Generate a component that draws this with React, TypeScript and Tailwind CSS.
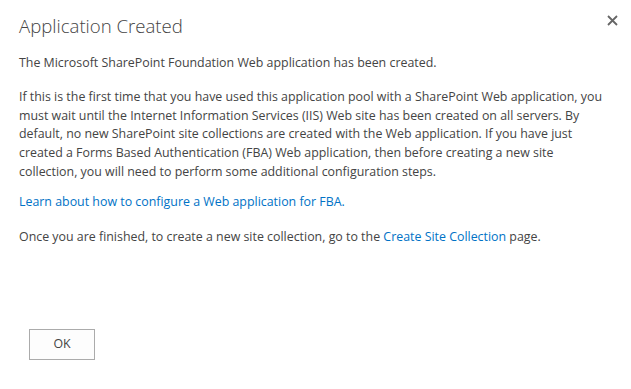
export default function App() {
  return (
    <div className="w-[631px] h-[389px] bg-white relative font-['Open_Sans',sans-serif] text-[#444444]">
      <button className="absolute right-[11px] top-[12px] w-[16px] h-[16px] flex items-center justify-center">
        <svg width="11" height="11" viewBox="0 0 11 11">
          <path d="M1 1L10 10M10 1L1 10" stroke="#666666" strokeWidth="1.8" />
        </svg>
      </button>
      <div className="flex flex-col pl-[19px] pr-[20px] pt-[12px]">
        <h1 className="text-[18.6px] font-light leading-[28px] text-[#444444]">Application Created</h1>
        <div className="mt-[14px] text-[12.4px] leading-[18.75px] flex flex-col">
          <p>The Microsoft SharePoint Foundation Web application has been created.</p>
          <p className="mt-[15px]">
            If this is the first time that you have used this application pool with a SharePoint Web application, you
            <br />
            must wait until the Internet Information Services (IIS) Web site has been created on all servers. By
            <br />
            default, no new SharePoint site collections are created with the Web application. If you have just
            <br />
            created a Forms Based Authentication (FBA) Web application, then before creating a new site
            <br />
            collection, you will need to perform some additional configuration steps.
          </p>
          <p className="mt-[11px]">
            <a className="text-[#0072c6]">Learn about how to configure a Web application for FBA.</a>
          </p>
          <p className="mt-[17px]">
            Once you are finished, to create a new site collection, go to the{" "}
            <a className="text-[#0072c6]">Create Site Collection</a> page.
          </p>
        </div>
        <div className="mt-[82px]">
          <button className="ml-[10px] w-[66px] h-[31px] border border-[#ababab] bg-[#fdfdfd] text-[12.4px] text-[#444444]">
            OK
          </button>
        </div>
      </div>
    </div>
  );
}
